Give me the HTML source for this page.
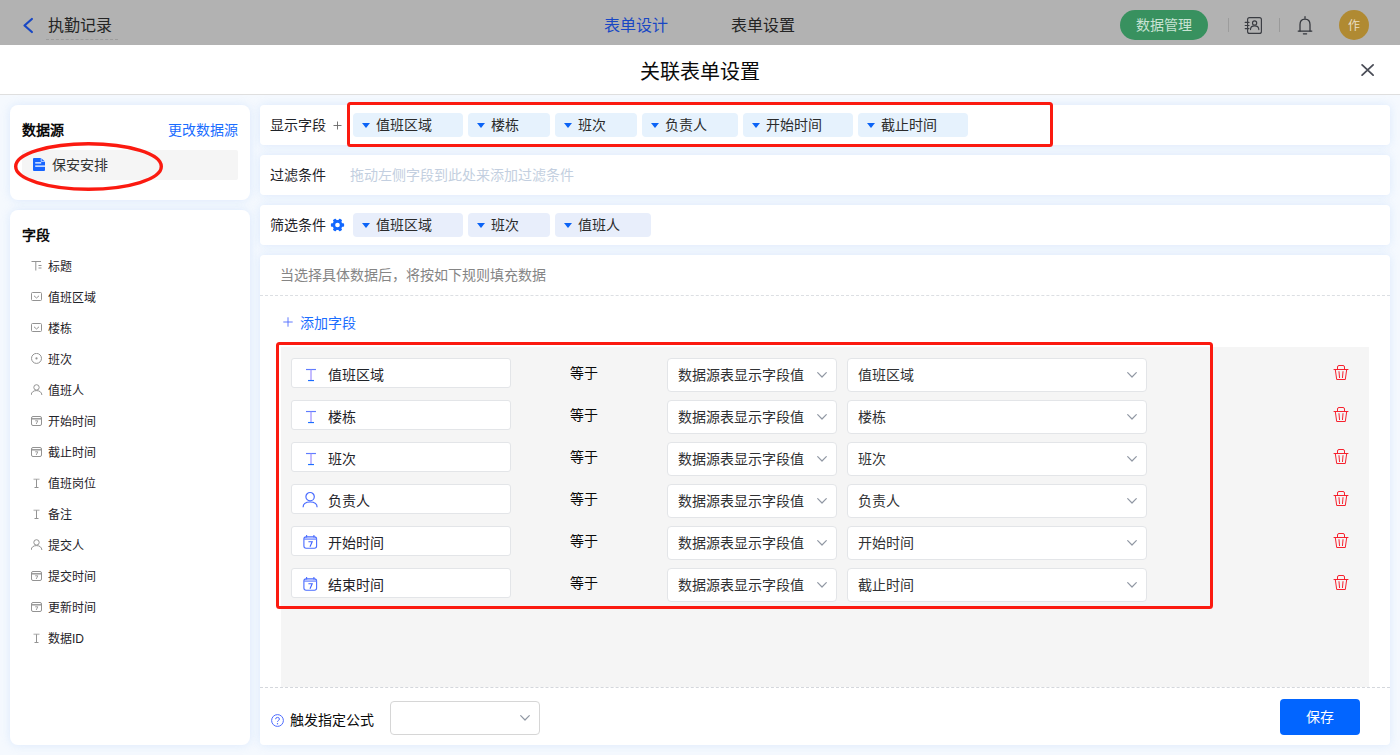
<!DOCTYPE html>
<html lang="zh-CN">
<head>
<meta charset="utf-8">
<title>关联表单设置</title>
<style>
*{box-sizing:border-box;margin:0;padding:0}
html,body{width:1400px;height:755px;overflow:hidden}
body{position:relative;background:#f5f9fe;font-family:"Liberation Sans",sans-serif;font-size:14px;color:#1f2329;line-height:20px}
.abs{position:absolute}
.t{position:absolute;white-space:nowrap;line-height:20px;height:20px}
svg{position:absolute;overflow:visible}
/* top bar (dimmed by modal mask) */
#topbar{left:0;top:0;width:1400px;height:45px;background:#b2b2b2}
#hdr{left:0;top:45px;width:1400px;height:50px;background:#fff;border-bottom:1px solid #dfdfdf}
.card{position:absolute;background:#fff;border-radius:8px;box-shadow:0 0 10px rgba(160,200,250,.3)}
.row{position:absolute;background:#fff;border-radius:4px;box-shadow:0 0 10px rgba(160,200,250,.3);left:260px;width:1130px;height:40px}
.tag{position:absolute;height:24px;border-radius:4px;background:#e6f2fd;top:8px}
.tag i{position:absolute;left:8.5px;top:10px;width:0;height:0;border-left:4.5px solid transparent;border-right:4.5px solid transparent;border-top:5px solid #0b63f6}
.tag span{position:absolute;left:23px;top:2px;line-height:20px;white-space:nowrap;color:#2b2b2b}
.tag.b{background:#e8eefb}
svg.g{color:#939393}
.fi{position:absolute;left:38px;font-size:12px;line-height:18px;color:#1f2329;white-space:nowrap}

.inp{position:absolute;left:10px;width:220px;height:30px;background:#fff;border:1px solid #e3e5e8;border-radius:3px}
.inp span{position:absolute;left:36px;top:6px;line-height:20px;white-space:nowrap;color:#1f2329}
.inp svg{left:13px;top:9px;color:#4d6bfe}
.eq{position:absolute;left:289px;line-height:20px;white-space:nowrap;color:#0a0a0a}
.sel{position:absolute;height:34px;background:#fff;border:1px solid #e3e5e8;border-radius:4px}
.sel span{position:absolute;left:10px;top:6px;line-height:20px;white-space:nowrap;color:#303133}
.sel svg{top:13px;right:9px}
.del{left:1052px}
</style>
</head>
<body>
<svg width="0" height="0" style="left:0;top:0"><defs>
<symbol id="i-title" viewBox="0 0 12 12"><path d="M0.5 1.5 H10 M4.8 1.5 V10.5 M7.5 5.5 H10.5 M7.5 8 H10.5" fill="none" stroke="currentColor" stroke-width="1"/></symbol>
<symbol id="i-sel" viewBox="0 0 12 12"><rect x="0.5" y="1.5" width="10" height="8" rx="1" fill="none" stroke="currentColor" stroke-width="1"/><path d="M3 4.8 L5.5 7 L8 4.8" fill="none" stroke="currentColor" stroke-width="1"/></symbol>
<symbol id="i-radio" viewBox="0 0 12 12"><circle cx="5.5" cy="5.4" r="5" fill="none" stroke="currentColor" stroke-width="1"/><circle cx="5.5" cy="5.4" r="1.1" fill="currentColor"/></symbol>
<symbol id="i-user" viewBox="0 0 12 12"><circle cx="5.5" cy="3.4" r="2.7" fill="none" stroke="currentColor" stroke-width="1"/><path d="M0.1 11 C0.4 8 2.5 6.6 5.5 6.6 S10.6 8 10.9 11" fill="none" stroke="currentColor" stroke-width="1"/></symbol>
<symbol id="i-date" viewBox="0 0 12 12"><rect x="0.5" y="1.5" width="10" height="9" rx="1.5" fill="none" stroke="currentColor" stroke-width="1"/><path d="M0.5 3.8 H10.5" stroke="currentColor" stroke-width="1.4" fill="none"/><path d="M4.2 5.8 H6.8 L5.2 9" fill="none" stroke="currentColor" stroke-width="0.9"/></symbol>
<symbol id="i-user2" viewBox="0 0 17 18"><circle cx="8.1" cy="5.7" r="4.2" fill="none" stroke="#4a6cff" stroke-width="1.2"/><path d="M1.1 16.2 C1.1 12.6 4.2 11 8.1 11 S15.1 12.6 15.1 16.2" fill="none" stroke="#4a6cff" stroke-width="1.2"/></symbol>
<symbol id="i-date2" viewBox="0 0 15 16"><rect x="0.9" y="2.9" width="12.7" height="11.4" rx="2.2" fill="none" stroke="#4a6cff" stroke-width="1.1"/><path d="M3.6 1 V3.6 M10.9 1 V3.6" stroke="#4a6cff" stroke-width="1.1" fill="none"/><path d="M0.9 5.1 H13.6" stroke="#6f88ff" stroke-width="1.3" fill="none"/><path d="M5.4 7.7 H9.2 L7 12.7" fill="none" stroke="#3f62ff" stroke-width="1.1"/></symbol>
<symbol id="i-text2" viewBox="0 0 12 12"><path d="M0.85 1.3 H9.4" stroke="#5f7cff" stroke-width="1" fill="none"/><path d="M5.15 1.3 V10.7" stroke="#9a8cff" stroke-width="1" fill="none"/><path d="M2.6 10.75 H7.7" stroke="#1a6dff" stroke-width="1" fill="none"/></symbol>
<symbol id="i-text" viewBox="0 0 12 12"><path d="M2.5 2.3 H8.5" stroke="currentColor" stroke-width="1.5" opacity=".55" fill="none"/><path d="M5.5 2.3 V10.5 M3.5 10.5 H7.5" fill="none" stroke="currentColor" stroke-width="1"/></symbol>
</defs></svg>
<!-- ===== top bar ===== -->
<div class="abs" id="topbar">
  <svg style="left:22px;top:16px" width="12" height="18" viewBox="0 0 12 18"><path d="M9.9 3 L2.5 9.5 L9.9 16" fill="none" stroke="#1847c4" stroke-width="2.2" stroke-linecap="round" stroke-linejoin="round"/></svg>
  <div class="t" style="left:48px;top:16px;font-size:16px;color:#242424">执勤记录</div>
  <div class="abs" style="left:46px;top:39px;width:72px;height:0;border-top:1px dashed #9c9c9c"></div>
  <div class="t" style="left:603.5px;top:16px;font-size:16px;letter-spacing:.2px;color:#1847c4">表单设计</div>
  <div class="t" style="left:730.5px;top:16px;font-size:16px;letter-spacing:.2px;color:#242424">表单设置</div>
  <div class="abs" style="left:1120px;top:10px;width:88px;height:30px;border-radius:15px;background:#38915f"></div>
  <div class="t" style="left:1136px;top:15px;font-size:14px;color:#c9e3d4">数据管理</div>
  <div class="abs" style="left:1228px;top:18px;width:1px;height:14px;background:#9c9c9c"></div>
  <div class="abs" style="left:1279px;top:18px;width:1px;height:14px;background:#9a9a9a"></div>
  <svg style="left:1244px;top:16px" width="19" height="19" viewBox="0 0 19 19"><g fill="none" stroke="#3a3c42" stroke-width="1.15" stroke-linecap="round"><rect x="3.6" y="1.6" width="13.8" height="15.8" rx="2"/><path d="M1.2 6.4 H5 M1.2 9.5 H5 M1.2 12.6 H5"/><circle cx="10.6" cy="6.9" r="2.1"/><path d="M6.5 13.6 Q6.5 9.9 10.6 9.9 Q14.8 9.9 14.8 13.6"/></g></svg>
  <svg style="left:1296px;top:15px" width="18" height="20" viewBox="0 0 18 20"><g fill="none" stroke="#33363c" stroke-width="1.25" stroke-linecap="round"><path d="M9 1.7 V3.2"/><path d="M4 16 V9.6 Q4 4.1 9 4.1 Q14 4.1 14 9.6 V16"/><path d="M2.2 16.1 H15.8"/><path d="M7.4 18.8 H10.6"/></g></svg>
  <div class="abs" style="left:1339px;top:10px;width:30px;height:30px;border-radius:15px;background:#b08a32"></div>
  <div class="t" style="left:1348px;top:15.5px;font-size:12px;color:#eadfc2">作</div>
</div>
<!-- ===== modal header ===== -->
<div class="abs" id="hdr">
  <div class="t" style="left:640px;top:15px;font-size:20px;line-height:24px;height:24px;color:#0a0a0a">关联表单设置</div>
  <svg style="left:1361px;top:18px" width="14" height="14" viewBox="0 0 14 14"><path d="M1.1 1.9 L12.1 12.1 M12.1 1.9 L1.1 12.1" stroke="#4a4d57" stroke-width="1.8" stroke-linecap="round"/></svg>
</div>

<!-- ===== left: datasource card ===== -->
<div class="card" style="left:10px;top:105px;width:240px;height:95px">
  <div class="t" style="left:12px;top:15px;font-weight:bold;color:#0a0a0a">数据源</div>
  <div class="t" style="left:158px;top:15px;color:#1a6dff">更改数据源</div>
  <div class="abs" style="left:12px;top:45px;width:216px;height:30px;background:#f5f5f5;border-radius:2px"></div>
  <svg style="left:23px;top:53px" width="12" height="13" viewBox="0 0 12 13"><path d="M1 0 H8 L12 3.6 V12 Q12 13 11 13 H1 Q0 13 0 12 V1 Q0 0 1 0 Z" fill="#1765ff"/><path d="M8.2 0 V3.4 H12" stroke="#fff" stroke-width=".8" fill="none" opacity=".85"/><path d="M2.2 4.9 H8.2 M2.2 8.1 H12" stroke="#fff" stroke-width="1.4" fill="none"/></svg>
  <div class="t" style="left:42px;top:50px;color:#333">保安安排</div>
</div>
<svg style="left:0;top:0" width="1400" height="755"><ellipse cx="88.5" cy="166.5" rx="72.8" ry="22.7" fill="none" stroke="#fb1a10" stroke-width="3.4"/></svg>

<!-- ===== left: fields card ===== -->
<div class="card" id="fields" style="left:10px;top:210px;width:240px;height:535px">
  <div class="t" style="left:12px;top:15px;font-weight:bold;color:#0a0a0a">字段</div>
  <svg class="g" style="left:21px;top:50px" width="12" height="12" viewBox="0 0 12 12"><use href="#i-title"/></svg><div class="fi" style="top:47.5px">标题</div>
  <svg class="g" style="left:21px;top:81px" width="12" height="12" viewBox="0 0 12 12"><use href="#i-sel"/></svg><div class="fi" style="top:78.5px">值班区域</div>
  <svg class="g" style="left:21px;top:112px" width="12" height="12" viewBox="0 0 12 12"><use href="#i-sel"/></svg><div class="fi" style="top:109.5px">楼栋</div>
  <svg class="g" style="left:21px;top:143px" width="12" height="12" viewBox="0 0 12 12"><use href="#i-radio"/></svg><div class="fi" style="top:140.5px">班次</div>
  <svg class="g" style="left:21px;top:174px" width="12" height="12" viewBox="0 0 12 12"><use href="#i-user"/></svg><div class="fi" style="top:171.5px">值班人</div>
  <svg class="g" style="left:21px;top:205px" width="12" height="12" viewBox="0 0 12 12"><use href="#i-date"/></svg><div class="fi" style="top:202.5px">开始时间</div>
  <svg class="g" style="left:21px;top:236px" width="12" height="12" viewBox="0 0 12 12"><use href="#i-date"/></svg><div class="fi" style="top:233.5px">截止时间</div>
  <svg class="g" style="left:21px;top:267px" width="12" height="12" viewBox="0 0 12 12"><use href="#i-text"/></svg><div class="fi" style="top:264.5px">值班岗位</div>
  <svg class="g" style="left:21px;top:298px" width="12" height="12" viewBox="0 0 12 12"><use href="#i-text"/></svg><div class="fi" style="top:295.5px">备注</div>
  <svg class="g" style="left:21px;top:329px" width="12" height="12" viewBox="0 0 12 12"><use href="#i-user"/></svg><div class="fi" style="top:326.5px">提交人</div>
  <svg class="g" style="left:21px;top:360px" width="12" height="12" viewBox="0 0 12 12"><use href="#i-date"/></svg><div class="fi" style="top:357.5px">提交时间</div>
  <svg class="g" style="left:21px;top:391px" width="12" height="12" viewBox="0 0 12 12"><use href="#i-date"/></svg><div class="fi" style="top:388.5px">更新时间</div>
  <svg class="g" style="left:21px;top:422px" width="12" height="12" viewBox="0 0 12 12"><use href="#i-text"/></svg><div class="fi" style="top:419.5px">数据ID</div>
</div>

<!-- ===== right: display fields row ===== -->
<div class="row" style="top:105px">
  <div class="t" style="left:10px;top:10px">显示字段</div>
  <svg style="left:72.5px;top:16px" width="10" height="10" viewBox="0 0 10 10"><path d="M4.5 0.5 V8.5 M0.5 4.5 H8.5" stroke="#666" stroke-width="0.9" fill="none"/></svg>
  <div class="tag" style="left:93px;width:110px"><i></i><span>值班区域</span></div>
  <div class="tag" style="left:208px;width:82px"><i></i><span>楼栋</span></div>
  <div class="tag" style="left:295px;width:82px"><i></i><span>班次</span></div>
  <div class="tag" style="left:382px;width:96px"><i></i><span>负责人</span></div>
  <div class="tag" style="left:483px;width:110px"><i></i><span>开始时间</span></div>
  <div class="tag" style="left:598px;width:110px"><i></i><span>截止时间</span></div>
</div>
<!-- ===== right: filter row ===== -->
<div class="row" style="top:155px">
  <div class="t" style="left:10px;top:10px">过滤条件</div>
  <div class="t" style="left:90px;top:10px;color:#c3cfe0">拖动左侧字段到此处来添加过滤条件</div>
</div>
<!-- ===== right: screening row ===== -->
<div class="row" style="top:205px">
  <div class="t" style="left:10px;top:10px">筛选条件</div>
  <svg style="left:71px;top:13px" width="14" height="14" viewBox="0 0 14 14"><g fill="#1268ff"><circle cx="6.5" cy="7" r="5"/><g id="gt"><rect x="-0.1" y="5.3" width="3.2" height="3.4" rx=".8"/><rect x="9.9" y="5.3" width="3.2" height="3.4" rx=".8"/></g><use href="#gt" transform="rotate(60 6.5 7)"/><use href="#gt" transform="rotate(120 6.5 7)"/></g><circle cx="6.5" cy="7" r="2.35" fill="#fff"/></svg>
  <div class="tag b" style="left:93px;width:110px"><i></i><span>值班区域</span></div>
  <div class="tag b" style="left:208px;width:82px"><i></i><span>班次</span></div>
  <div class="tag b" style="left:295px;width:96px"><i></i><span>值班人</span></div>
</div>
<svg style="left:0;top:0" width="1400" height="755"><rect x="348.5" y="103.5" width="703" height="42" rx="2" fill="none" stroke="#fb1a10" stroke-width="3"/></svg>

<!-- ===== right: main card ===== -->
<div class="card" style="left:260px;top:255px;width:1130px;height:490px;border-radius:4px">
  <div class="t" style="left:20px;top:10px;color:#858585">当选择具体数据后，将按如下规则填充数据</div>
  <div class="abs" style="left:0;top:40px;width:1130px;height:0;border-top:1px dashed #dcdfe3"></div>
  <svg style="left:23px;top:62px" width="10" height="10" viewBox="0 0 10 10"><path d="M5 0.3 V9.7 M0.3 5 H9.7" stroke="#4f6bff" stroke-width="0.9" fill="none"/></svg>
  <div class="t" style="left:40px;top:58px;color:#1a6dff">添加字段</div>
  <div class="abs" id="panel" style="left:21px;top:92px;width:1088px;height:340px;background:#f5f5f5">
  <div class="inp" style="top:11px"><svg width="14" height="14" viewBox="0 0 12 12"><use href="#i-text2"/></svg><span>值班区域</span></div>
  <div class="eq" style="top:16px">等于</div>
  <div class="sel" style="left:386px;top:11px;width:170px"><span>数据源表显示字段值</span><svg width="10" height="6" viewBox="0 0 10 6"><path d="M0.7 0.7 L5 5 L9.3 0.7" fill="none" stroke="#9097a3" stroke-width="1.2" stroke-linecap="round" stroke-linejoin="round"/></svg></div>
  <div class="sel" style="left:566px;top:11px;width:300px"><span>值班区域</span><svg width="10" height="6" viewBox="0 0 10 6"><path d="M0.7 0.7 L5 5 L9.3 0.7" fill="none" stroke="#9097a3" stroke-width="1.2" stroke-linecap="round" stroke-linejoin="round"/></svg></div>
  <svg class="del" style="top:17px" width="16" height="17" viewBox="0 0 16 17"><path d="M1 5.5 H15 M4.5 5.5 V3 Q4.5 1.5 6 1.5 H10 Q11.5 1.5 11.5 3 V5.5 M2.3 5.5 L3.7 15.5 H12.3 L13.7 5.5 M6 7.6 L6.5 13.6 M10 7.6 L9.5 13.6" fill="none" stroke="#f7212e" stroke-width="1" stroke-linejoin="round" stroke-linecap="round"/></svg>
  <div class="inp" style="top:53px"><svg width="14" height="14" viewBox="0 0 12 12"><use href="#i-text2"/></svg><span>楼栋</span></div>
  <div class="eq" style="top:58px">等于</div>
  <div class="sel" style="left:386px;top:53px;width:170px"><span>数据源表显示字段值</span><svg width="10" height="6" viewBox="0 0 10 6"><path d="M0.7 0.7 L5 5 L9.3 0.7" fill="none" stroke="#9097a3" stroke-width="1.2" stroke-linecap="round" stroke-linejoin="round"/></svg></div>
  <div class="sel" style="left:566px;top:53px;width:300px"><span>楼栋</span><svg width="10" height="6" viewBox="0 0 10 6"><path d="M0.7 0.7 L5 5 L9.3 0.7" fill="none" stroke="#9097a3" stroke-width="1.2" stroke-linecap="round" stroke-linejoin="round"/></svg></div>
  <svg class="del" style="top:59px" width="16" height="17" viewBox="0 0 16 17"><path d="M1 5.5 H15 M4.5 5.5 V3 Q4.5 1.5 6 1.5 H10 Q11.5 1.5 11.5 3 V5.5 M2.3 5.5 L3.7 15.5 H12.3 L13.7 5.5 M6 7.6 L6.5 13.6 M10 7.6 L9.5 13.6" fill="none" stroke="#f7212e" stroke-width="1" stroke-linejoin="round" stroke-linecap="round"/></svg>
  <div class="inp" style="top:95px"><svg width="14" height="14" viewBox="0 0 12 12"><use href="#i-text2"/></svg><span>班次</span></div>
  <div class="eq" style="top:100px">等于</div>
  <div class="sel" style="left:386px;top:95px;width:170px"><span>数据源表显示字段值</span><svg width="10" height="6" viewBox="0 0 10 6"><path d="M0.7 0.7 L5 5 L9.3 0.7" fill="none" stroke="#9097a3" stroke-width="1.2" stroke-linecap="round" stroke-linejoin="round"/></svg></div>
  <div class="sel" style="left:566px;top:95px;width:300px"><span>班次</span><svg width="10" height="6" viewBox="0 0 10 6"><path d="M0.7 0.7 L5 5 L9.3 0.7" fill="none" stroke="#9097a3" stroke-width="1.2" stroke-linecap="round" stroke-linejoin="round"/></svg></div>
  <svg class="del" style="top:101px" width="16" height="17" viewBox="0 0 16 17"><path d="M1 5.5 H15 M4.5 5.5 V3 Q4.5 1.5 6 1.5 H10 Q11.5 1.5 11.5 3 V5.5 M2.3 5.5 L3.7 15.5 H12.3 L13.7 5.5 M6 7.6 L6.5 13.6 M10 7.6 L9.5 13.6" fill="none" stroke="#f7212e" stroke-width="1" stroke-linejoin="round" stroke-linecap="round"/></svg>
  <div class="inp" style="top:137px"><svg style="left:10px;top:6px" width="17" height="18" viewBox="0 0 17 18"><use href="#i-user2"/></svg><span>负责人</span></div>
  <div class="eq" style="top:142px">等于</div>
  <div class="sel" style="left:386px;top:137px;width:170px"><span>数据源表显示字段值</span><svg width="10" height="6" viewBox="0 0 10 6"><path d="M0.7 0.7 L5 5 L9.3 0.7" fill="none" stroke="#9097a3" stroke-width="1.2" stroke-linecap="round" stroke-linejoin="round"/></svg></div>
  <div class="sel" style="left:566px;top:137px;width:300px"><span>负责人</span><svg width="10" height="6" viewBox="0 0 10 6"><path d="M0.7 0.7 L5 5 L9.3 0.7" fill="none" stroke="#9097a3" stroke-width="1.2" stroke-linecap="round" stroke-linejoin="round"/></svg></div>
  <svg class="del" style="top:143px" width="16" height="17" viewBox="0 0 16 17"><path d="M1 5.5 H15 M4.5 5.5 V3 Q4.5 1.5 6 1.5 H10 Q11.5 1.5 11.5 3 V5.5 M2.3 5.5 L3.7 15.5 H12.3 L13.7 5.5 M6 7.6 L6.5 13.6 M10 7.6 L9.5 13.6" fill="none" stroke="#f7212e" stroke-width="1" stroke-linejoin="round" stroke-linecap="round"/></svg>
  <div class="inp" style="top:179px"><svg style="left:11px;top:7px" width="15" height="16" viewBox="0 0 15 16"><use href="#i-date2"/></svg><span>开始时间</span></div>
  <div class="eq" style="top:184px">等于</div>
  <div class="sel" style="left:386px;top:179px;width:170px"><span>数据源表显示字段值</span><svg width="10" height="6" viewBox="0 0 10 6"><path d="M0.7 0.7 L5 5 L9.3 0.7" fill="none" stroke="#9097a3" stroke-width="1.2" stroke-linecap="round" stroke-linejoin="round"/></svg></div>
  <div class="sel" style="left:566px;top:179px;width:300px"><span>开始时间</span><svg width="10" height="6" viewBox="0 0 10 6"><path d="M0.7 0.7 L5 5 L9.3 0.7" fill="none" stroke="#9097a3" stroke-width="1.2" stroke-linecap="round" stroke-linejoin="round"/></svg></div>
  <svg class="del" style="top:185px" width="16" height="17" viewBox="0 0 16 17"><path d="M1 5.5 H15 M4.5 5.5 V3 Q4.5 1.5 6 1.5 H10 Q11.5 1.5 11.5 3 V5.5 M2.3 5.5 L3.7 15.5 H12.3 L13.7 5.5 M6 7.6 L6.5 13.6 M10 7.6 L9.5 13.6" fill="none" stroke="#f7212e" stroke-width="1" stroke-linejoin="round" stroke-linecap="round"/></svg>
  <div class="inp" style="top:221px"><svg style="left:11px;top:7px" width="15" height="16" viewBox="0 0 15 16"><use href="#i-date2"/></svg><span>结束时间</span></div>
  <div class="eq" style="top:226px">等于</div>
  <div class="sel" style="left:386px;top:221px;width:170px"><span>数据源表显示字段值</span><svg width="10" height="6" viewBox="0 0 10 6"><path d="M0.7 0.7 L5 5 L9.3 0.7" fill="none" stroke="#9097a3" stroke-width="1.2" stroke-linecap="round" stroke-linejoin="round"/></svg></div>
  <div class="sel" style="left:566px;top:221px;width:300px"><span>截止时间</span><svg width="10" height="6" viewBox="0 0 10 6"><path d="M0.7 0.7 L5 5 L9.3 0.7" fill="none" stroke="#9097a3" stroke-width="1.2" stroke-linecap="round" stroke-linejoin="round"/></svg></div>
  <svg class="del" style="top:227px" width="16" height="17" viewBox="0 0 16 17"><path d="M1 5.5 H15 M4.5 5.5 V3 Q4.5 1.5 6 1.5 H10 Q11.5 1.5 11.5 3 V5.5 M2.3 5.5 L3.7 15.5 H12.3 L13.7 5.5 M6 7.6 L6.5 13.6 M10 7.6 L9.5 13.6" fill="none" stroke="#f7212e" stroke-width="1" stroke-linejoin="round" stroke-linecap="round"/></svg>
  </div>
  <div class="abs" style="left:0;top:432px;width:1130px;height:0;border-top:1px dashed #d4d7dc"></div>
  <svg style="left:11px;top:459px" width="13" height="13" viewBox="0 0 13 13"><circle cx="6.5" cy="6.5" r="5.9" fill="none" stroke="#4d6bfe" stroke-width="1"/><path d="M4.6 5.2 Q4.6 3.4 6.5 3.4 Q8.4 3.4 8.4 5 Q8.4 6.1 7.3 6.6 Q6.5 7 6.5 7.9" fill="none" stroke="#4d6bfe" stroke-width="1"/><circle cx="6.5" cy="9.7" r=".7" fill="#4d6bfe"/></svg>
  <div class="t" style="left:30px;top:455px;color:#0a0a0a">触发指定公式</div>
  <div class="sel" style="left:130px;top:446px;width:150px;border-color:#d6d6d6"><svg width="10" height="6" viewBox="0 0 10 6"><path d="M0.7 0.7 L5 5 L9.3 0.7" fill="none" stroke="#9097a3" stroke-width="1.2" stroke-linecap="round" stroke-linejoin="round"/></svg></div>
  <div class="abs" style="left:1020px;top:444px;width:80px;height:36px;border-radius:4px;background:#0265ff"></div>
  <div class="t" style="left:1046px;top:452px;color:#fff;font-weight:500">保存</div>
</div>
<svg style="left:0;top:0" width="1400" height="755"><rect x="277.5" y="343.5" width="934" height="264" rx="2" fill="none" stroke="#fb1a10" stroke-width="3"/></svg>

</body>
</html>
